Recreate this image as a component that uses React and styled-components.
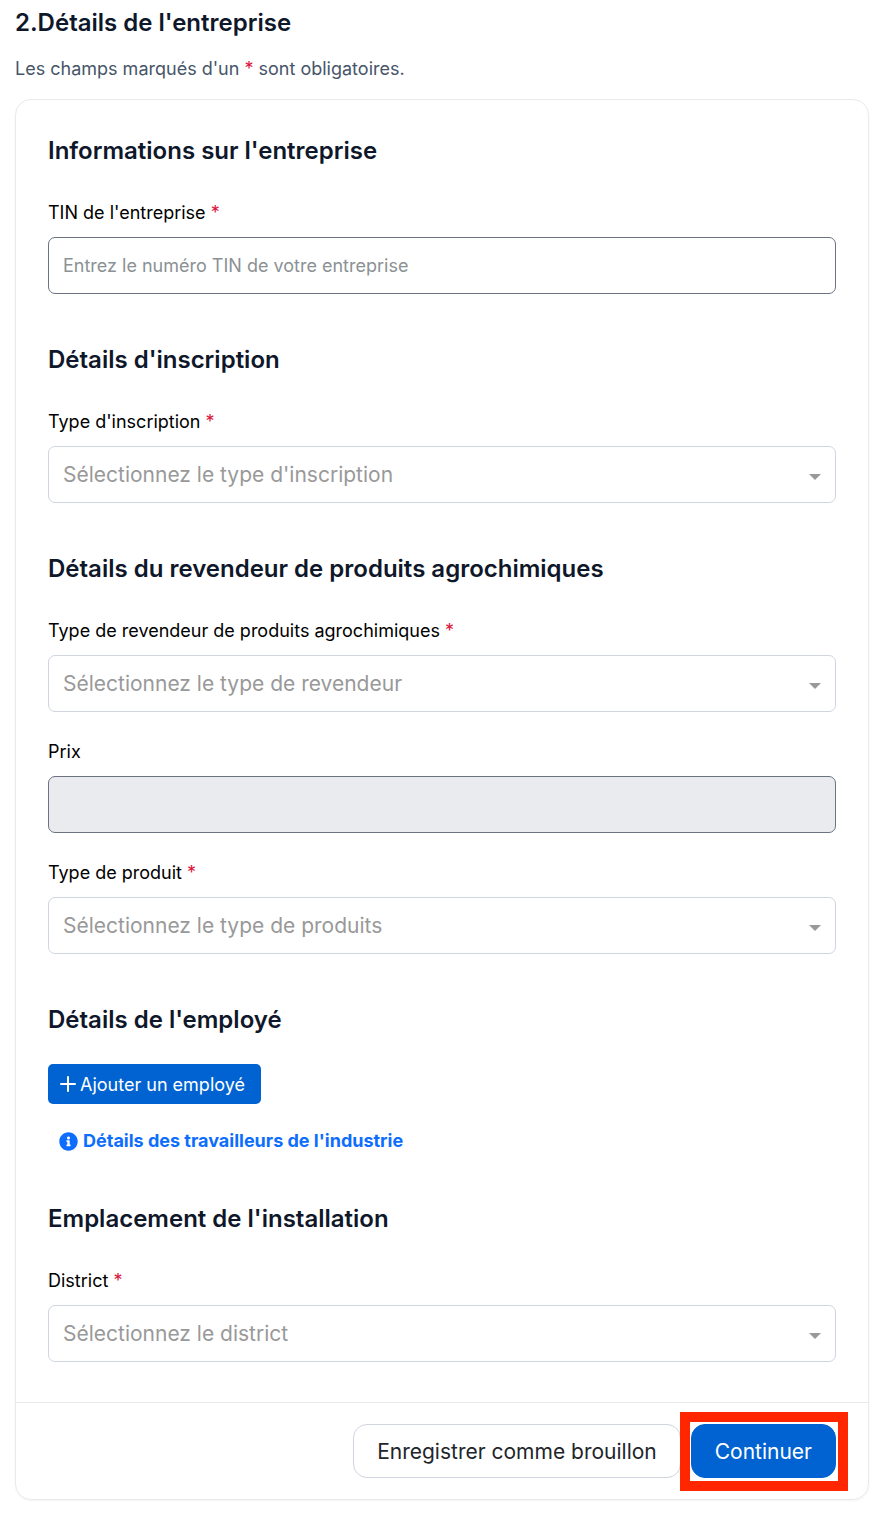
import styled, { createGlobalStyle } from "styled-components";
import { FaInfoCircle } from "react-icons/fa";

export default function App() {
  return (
    <Page>
      <GlobalStyle />
      <PageTitle>2.Détails de l'entreprise</PageTitle>
      <Hint>
        Les champs marqués d'un <Required>*</Required> sont obligatoires.
      </Hint>

      <Card>
        <CardBody>
          <Section>
            <SectionTitle>Informations sur l'entreprise</SectionTitle>
            <Field>
              <Label htmlFor="tin">
                TIN de l'entreprise <Required>*</Required>
              </Label>
              <Input id="tin" type="text" placeholder="Entrez le numéro TIN de votre entreprise" />
            </Field>
          </Section>

          <Section>
            <SectionTitle>Détails d'inscription</SectionTitle>
            <SelectField id="inscription" label="Type d'inscription" placeholder="Sélectionnez le type d'inscription" />
          </Section>

          <Section>
            <SectionTitle>Détails du revendeur de produits agrochimiques</SectionTitle>
            <Fields>
              <SelectField
                id="revendeur"
                label="Type de revendeur de produits agrochimiques"
                placeholder="Sélectionnez le type de revendeur"
              />
              <Field>
                <Label htmlFor="prix">Prix</Label>
                <Input id="prix" type="text" disabled />
              </Field>
              <SelectField id="produit" label="Type de produit" placeholder="Sélectionnez le type de produits" />
            </Fields>
          </Section>

          <Section $gap="28px">
            <SectionTitle>Détails de l'employé</SectionTitle>
            <Employees>
              <AddButton type="button">
                <PlusIcon viewBox="0 0 16 16" aria-hidden="true">
                  <path d="M8 1v14M1 8h14" />
                </PlusIcon>
                Ajouter un employé
              </AddButton>
              <InfoLink href="#travailleurs">
                <FaInfoCircle size={19} aria-hidden="true" />
                Détails des travailleurs de l'industrie
              </InfoLink>
            </Employees>
          </Section>

          <Section>
            <SectionTitle>Emplacement de l'installation</SectionTitle>
            <SelectField id="district" label="District" placeholder="Sélectionnez le district" />
          </Section>
        </CardBody>

        <CardFooter>
          <ActionButton type="button">Enregistrer comme brouillon</ActionButton>
          <Highlight>
            <ActionButton type="submit" $primary>
              Continuer
            </ActionButton>
          </Highlight>
        </CardFooter>
      </Card>
    </Page>
  );
}

function SelectField({ id, label, placeholder }) {
  return (
    <Field>
      <Label htmlFor={id}>
        {label} <Required>*</Required>
      </Label>
      <SelectWrap>
        <Select id={id} defaultValue="">
          <option value="">{placeholder}</option>
        </Select>
        <Caret viewBox="0 0 12 6" aria-hidden="true">
          <path d="M0 0h12L6 6z" />
        </Caret>
      </SelectWrap>
    </Field>
  );
}

const GlobalStyle = createGlobalStyle`
  * {
    box-sizing: border-box;
  }

  body {
    margin: 0;
    background-color: #fff;
    font-family: Inter, sans-serif;
    color: #000;
  }

  h1, h2, p {
    margin: 0;
  }

  button, input, select {
    font-family: inherit;
  }
`;

const Page = styled.main`
  padding: 7px 19px 17px 15px;
`;

const PageTitle = styled.h1`
  color: #0f172a;
  font-size: 24px;
  font-weight: 600;
  line-height: 32px;
`;

const Hint = styled.p`
  margin: 18px 0;
  color: #475569;
  font-size: 18px;
  line-height: 24px;
`;

const Required = styled.span`
  color: #dc143c;
`;

const Card = styled.form`
  border: 1px solid #e9eaee;
  border-radius: 16px;
  box-shadow: 0 1px 2px rgba(0, 0, 0, 0.05);
`;

const CardBody = styled.div`
  display: flex;
  flex-direction: column;
  gap: 50px;
  padding: 35px 32px 40px;
`;

const Section = styled.section`
  display: flex;
  flex-direction: column;
  gap: ${({ $gap }) => $gap || "34px"};
`;

const SectionTitle = styled.h2`
  color: #0f172a;
  font-size: 24px;
  font-weight: 600;
  line-height: 32px;
`;

const Fields = styled.div`
  display: flex;
  flex-direction: column;
  gap: 28px;
`;

const Field = styled.div`
  display: flex;
  flex-direction: column;
  gap: 12px;
`;

const Label = styled.label`
  font-size: 18px;
  line-height: 24px;
`;

const Input = styled.input`
  width: 100%;
  height: 57px;
  padding: 0 14px;
  border: 1px solid #6b7280;
  border-radius: 7px;
  background-color: #fff;
  font-size: 18px;

  &::placeholder {
    color: #8b9194;
  }

  &:disabled {
    background-color: #e9ebee;
  }
`;

const SelectWrap = styled.div`
  position: relative;
`;

const Select = styled.select`
  display: block;
  width: 100%;
  height: 57px;
  padding: 0 40px 0 14px;
  border: 1px solid #cfd4de;
  border-radius: 7px;
  background-color: #fff;
  color: #999;
  font-size: 21px;
  appearance: none;
`;

const Caret = styled.svg`
  position: absolute;
  top: 28px;
  right: 15px;
  width: 12px;
  height: 6px;
  fill: #999;
  pointer-events: none;
`;

const Employees = styled.div`
  display: flex;
  flex-direction: column;
  align-items: flex-start;
  gap: 25px;
`;

const AddButton = styled.button`
  display: flex;
  align-items: center;
  gap: 4px;
  height: 40px;
  padding: 0 16px 0 12px;
  border: 0;
  border-radius: 5px;
  background-color: #0063d1;
  color: #fff;
  font-size: 18px;
`;

const PlusIcon = styled.svg`
  width: 16px;
  height: 16px;
  fill: none;
  stroke: #fff;
  stroke-width: 2;
  stroke-linecap: round;
`;

const InfoLink = styled.a`
  display: flex;
  align-items: center;
  gap: 5px;
  padding-left: 11px;
  color: #0d6efd;
  font-size: 18px;
  font-weight: 700;
  line-height: 24px;
  text-decoration: none;
`;

const CardFooter = styled.footer`
  display: flex;
  justify-content: flex-end;
  gap: 10px;
  padding: 21px 32px;
  border-top: 1px solid #e9eaee;
`;

const ActionButton = styled.button`
  height: 54px;
  padding: 0 23px;
  border: 1px solid ${({ $primary }) => ($primary ? "#0063d1" : "#cfd4de")};
  border-radius: 14px;
  background-color: ${({ $primary }) => ($primary ? "#0063d1" : "#fff")};
  color: ${({ $primary }) => ($primary ? "#fff" : "#212529")};
  font-size: 21px;
`;

/* red frame that sits over the footer, around the main action */
const Highlight = styled.div`
  position: relative;

  &::after {
    content: "";
    position: absolute;
    inset: -12px -12px -13px -11px;
    border: 10px solid #ff2600;
    pointer-events: none;
  }
`;
